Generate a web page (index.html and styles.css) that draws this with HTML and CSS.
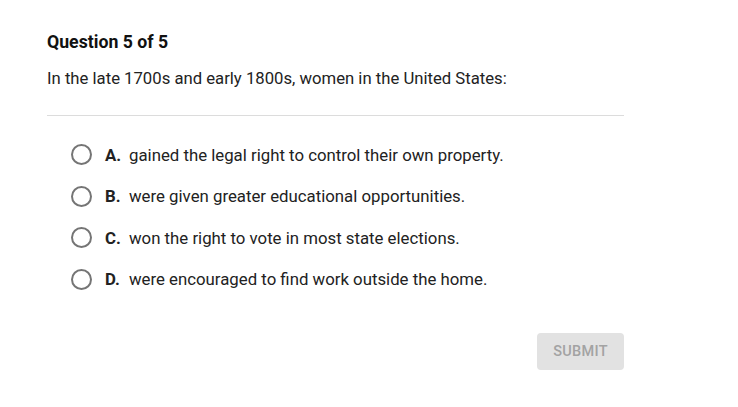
FILE: index.html
```html
<!DOCTYPE html>
<html>
<head>
<meta charset="utf-8">
<link rel="stylesheet" href="styles.css">
</head>
<body>
<div class="page">
  <h1 class="title">Question 5 of 5</h1>
  <p class="question">In the late 1700s and early 1800s, women in the United States:</p>
  <div class="divider"></div>
  <ul class="options">
    <li class="option"><span class="radio"></span><span class="letter">A.</span><span class="text">gained the legal right to control their own property.</span></li>
    <li class="option"><span class="radio"></span><span class="letter">B.</span><span class="text">were given greater educational opportunities.</span></li>
    <li class="option"><span class="radio"></span><span class="letter">C.</span><span class="text">won the right to vote in most state elections.</span></li>
    <li class="option"><span class="radio"></span><span class="letter">D.</span><span class="text">were encouraged to find work outside the home.</span></li>
  </ul>
  <div class="actions">
    <button class="submit">SUBMIT</button>
  </div>
</div>
</body>
</html>
```
FILE: styles.css
```css
html, body {
  margin: 0;
  padding: 0;
  background: #ffffff;
}
body {
  font-family: Roboto, "Liberation Sans", sans-serif;
  color: #212121;
}
.page {
  width: 577px;
  padding: 30px 0 0 47px;
}
.title {
  margin: 0;
  font-size: 17.7px;
  font-weight: 700;
  line-height: 24px;
  color: #111;
}
.question {
  margin: 14px 0 0;
  font-size: 16.7px;
  line-height: 22px;
  color: #222;
}
.divider {
  margin-top: 25px;
  height: 1px;
  background: #dcdcdc;
}
.options {
  list-style: none;
  margin: 18px 0 0;
  padding: 0 0 0 24px;
}
.option {
  display: flex;
  align-items: center;
  height: 41.5px;
  font-size: 16.8px;
  color: #222;
}
.radio {
  border: 2px solid #757575;
  border-radius: 50%;
  box-sizing: border-box;
  width: 21px;
  height: 21px;
  flex: none;
}
.letter {
  font-weight: 700;
  margin-left: 13px;
  width: 24px;
}
.actions {
  display: flex;
  justify-content: flex-end;
  margin-top: 33px;
}
.submit {
  width: 87px;
  height: 37px;
  border: none;
  border-radius: 4px;
  background: #e2e2e2;
  color: #a3a3a3;
  font-family: Roboto, "Liberation Sans", sans-serif;
  font-size: 14.5px;
  font-weight: 500;
  letter-spacing: 0.3px;
  padding: 0;
}
```
